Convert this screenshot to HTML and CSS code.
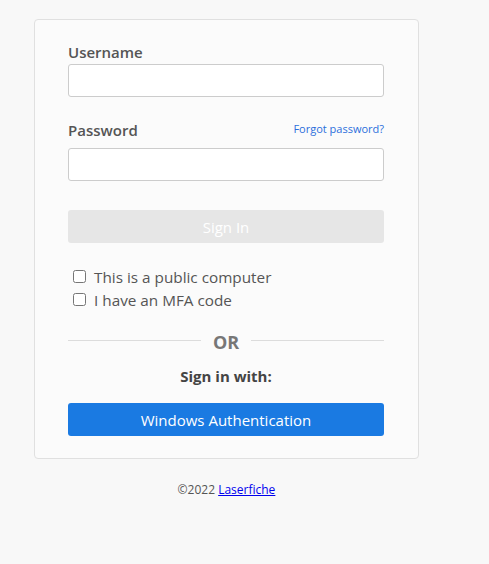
FILE: index.html
```html
<!DOCTYPE html>
<html>
<head>
<meta charset="utf-8">
<link rel="stylesheet" href="styles.css">
</head>
<body>
<div class="page">
  <div class="card">
    <label class="label label-user">Username</label>
    <input class="field" type="text">
    <div class="pw-row">
      <label class="label">Password</label>
      <a class="forgot" href="#">Forgot password?</a>
    </div>
    <input class="field" type="password">
    <button class="btn btn-signin" disabled>Sign In</button>
    <div class="checks">
      <label class="check"><input type="checkbox"><span>This is a public computer</span></label>
      <label class="check"><input type="checkbox"><span>I have an MFA code</span></label>
    </div>
    <div class="or-row">
      <span class="or-line"></span>
      <span class="or-text">OR</span>
      <span class="or-line"></span>
    </div>
    <div class="signin-with">Sign in with:</div>
    <button class="btn btn-windows">Windows Authentication</button>
  </div>
  <div class="footer">©2022 <a href="#">Laserfiche</a></div>
</div>
</body>
</html>
```

FILE: styles.css
```css
html, body {
  margin: 0;
  padding: 0;
  background: #f8f8f8;
  font-family: "Open Sans", "Liberation Sans", sans-serif;
}

.page {
  padding: 19px 0 0 34px;
  width: 385px;
}

.card {
  box-sizing: border-box;
  width: 385px;
  background: #fbfbfb;
  border: 1px solid #e0e0e0;
  border-radius: 4px;
  padding: 22px 34px 22px 33px;
  display: flex;
  flex-direction: column;
}

.label {
  display: block;
  font-size: 15px;
  line-height: 20px;
  font-weight: 600;
  color: #555;
}

.label-user {
  margin-bottom: 2px;
}

.field {
  box-sizing: border-box;
  width: 316px;
  height: 33px;
  margin: 0;
  border: 1px solid #cccccc;
  border-radius: 3px;
  background: #fff;
  padding: 0 8px;
  font-family: inherit;
  font-size: 14px;
  outline: none;
}

.pw-row {
  display: flex;
  justify-content: space-between;
  align-items: flex-start;
  margin-top: 23px;
  margin-bottom: 8px;
}

.forgot {
  font-size: 11px;
  line-height: 18px;
  color: #2b6fdc;
  text-decoration: none;
}

.btn {
  box-sizing: border-box;
  width: 316px;
  height: 33px;
  border: none;
  border-radius: 3px;
  font-family: inherit;
  font-size: 15px;
  color: #fff;
  padding: 0;
}

.btn-signin {
  margin-top: 29px;
  background: #e6e6e6;
}

.checks {
  margin-top: 22px;
  display: flex;
  flex-direction: column;
}

.check {
  display: flex;
  align-items: center;
  height: 23px;
  padding-left: 5px;
  font-size: 15.3px;
  color: #555;
}

.check input {
  width: 13px;
  height: 13px;
  margin: 0 8px 0 0;
}

.or-row {
  display: flex;
  align-items: center;
  margin-top: 19px;
  height: 24px;
}

.or-line {
  flex: 1;
  height: 1px;
  background: #dcdcdc;
  margin-bottom: 4px;
}

.or-text {
  font-size: 18px;
  line-height: 24px;
  font-weight: 700;
  color: #777;
  padding: 0 12px;
}

.signin-with {
  margin-top: 12px;
  text-align: center;
  font-size: 15px;
  line-height: 20px;
  font-weight: 700;
  color: #444;
}

.btn-windows {
  margin-top: 17px;
  background: #1a7ae2;
}

.footer {
  margin-top: 22px;
  text-align: center;
  font-size: 12px;
  line-height: 18px;
  color: #555;
}

.footer a {
  color: #0000ee;
  text-decoration: underline;
}
```
